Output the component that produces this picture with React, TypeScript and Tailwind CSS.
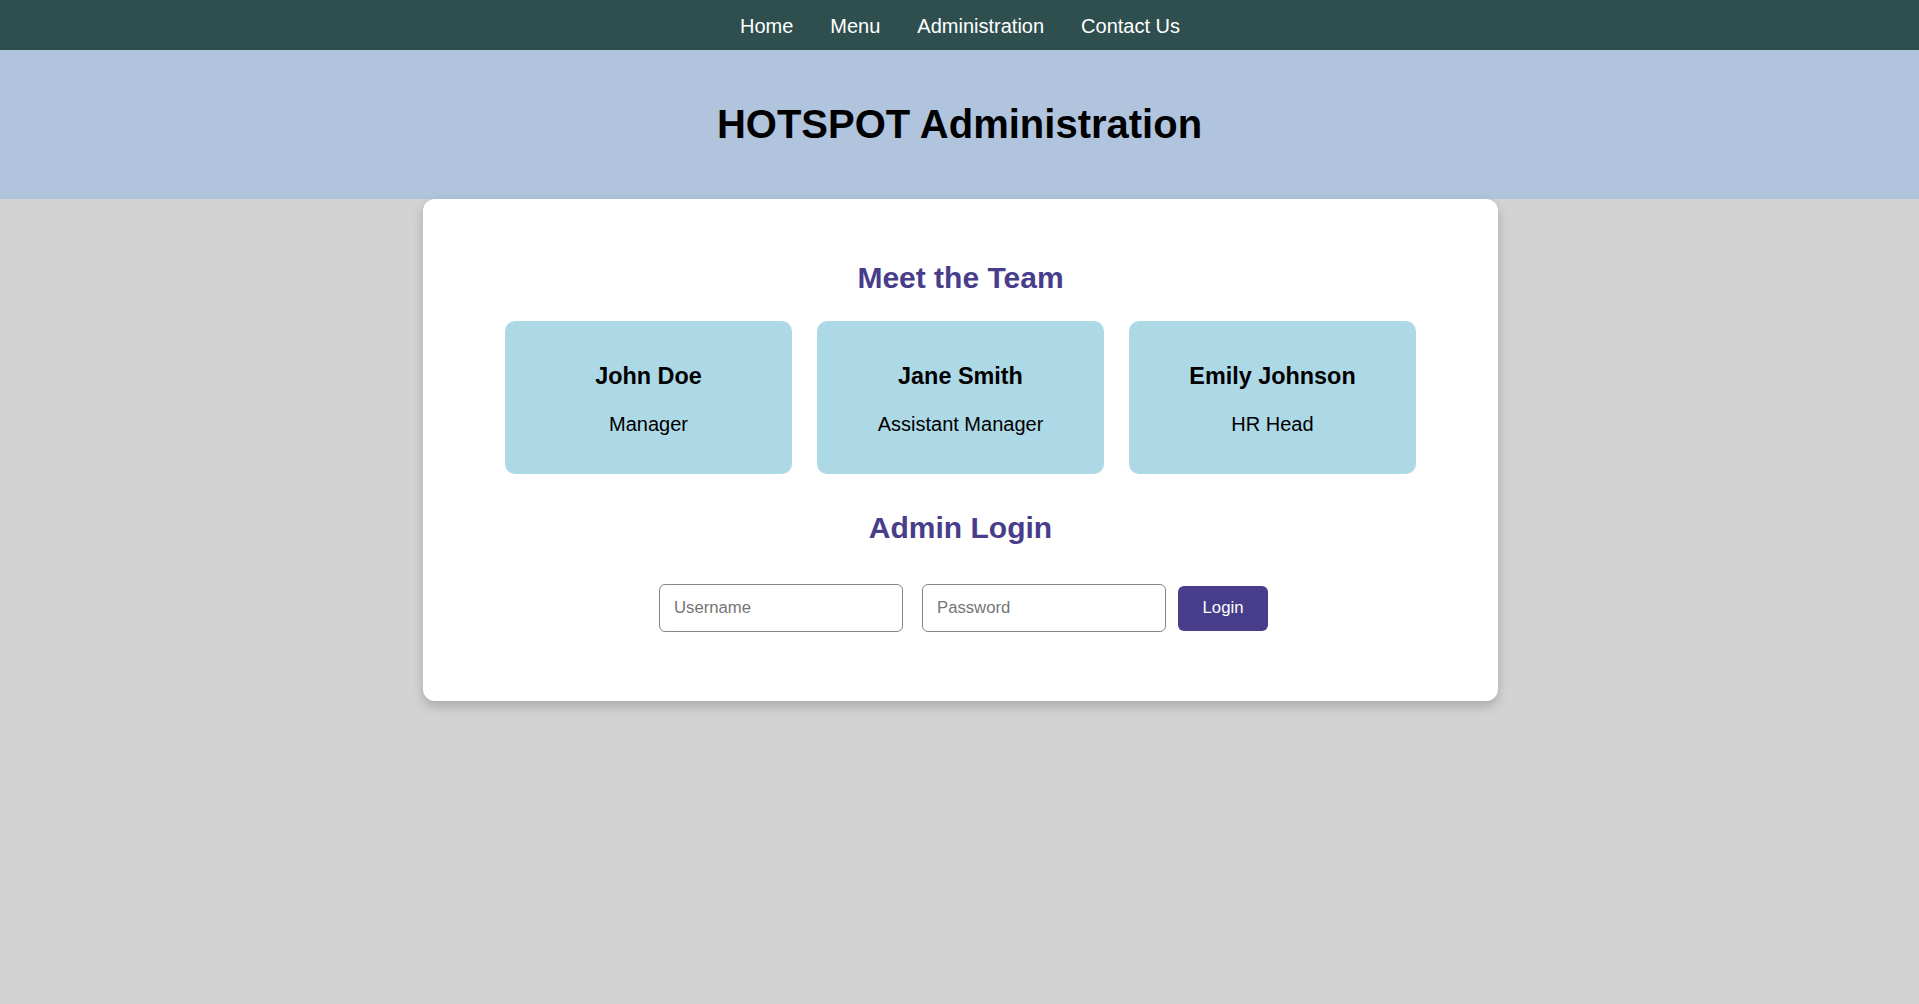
import React from "react";

const team = [
    { name: "John Doe", role: "Manager" },
    { name: "Jane Smith", role: "Assistant Manager" },
    { name: "Emily Johnson", role: "HR Head" },
];

const links = ["Home", "Menu", "Administration", "Contact Us"];

const App = () => {
    return (
        <div className="min-h-screen bg-[#d3d3d3] font-['Liberation_Sans',Arial,sans-serif] text-black">
            <nav className="h-[50px] bg-[#2f4f4f] flex items-center justify-center gap-[37px] pt-[2px] pl-[1px]">
                {links.map((l) => (
                    <a key={l} href="#" className="text-white text-[20px] leading-[23px]">
                        {l}
                    </a>
                ))}
            </nav>

            <header className="h-[149px] bg-[#b0c4de] flex items-center justify-center">
                <h1 className="text-[40px] font-bold leading-[46px] -mt-[2px]">
                    HOTSPOT Administration
                </h1>
            </header>

            {/* main card */}
            <main className="mx-auto w-[1075px] translate-x-[1px] bg-white rounded-[12px] shadow-[0_5px_12px_rgba(0,0,0,0.2)] pt-[62px] pb-[69px] flex flex-col items-center">
                <h2 className="text-[30px] leading-[34px] font-bold text-[#483d8b]">
                    Meet the Team
                </h2>

                <div className="mt-[26px] flex justify-center gap-[25px]">
                    {team.map((m) => (
                        <div
                            key={m.name}
                            className="w-[287px] h-[153px] bg-[#add8e6] rounded-[10px] flex flex-col items-center pt-[42px]"
                        >
                            <h3 className="text-[23.4px] leading-[27px] font-bold">{m.name}</h3>
                            <p className="mt-[23px] text-[20px] leading-[23px]">{m.role}</p>
                        </div>
                    ))}
                </div>

                <h2 className="mt-[37px] text-[30px] leading-[34px] font-bold text-[#483d8b]">
                    Admin Login
                </h2>

                <div className="mt-[39px] flex items-center pl-[6px]">
                    <input
                        type="text"
                        placeholder="Username"
                        className="w-[244px] h-[48px] border border-[#858585] rounded-[6px] px-[14px] text-[16.7px] placeholder:text-[#757575] outline-none"
                    />
                    <input
                        type="password"
                        placeholder="Password"
                        className="ml-[19px] w-[244px] h-[48px] border border-[#858585] rounded-[6px] px-[14px] text-[16.7px] placeholder:text-[#757575] outline-none"
                    />
                    <button className="ml-[12px] w-[90px] h-[45px] bg-[#483d8b] text-white rounded-[6px] text-[16.7px]">
                        Login
                    </button>
                </div>
            </main>
        </div>
    );
};

export default App;
